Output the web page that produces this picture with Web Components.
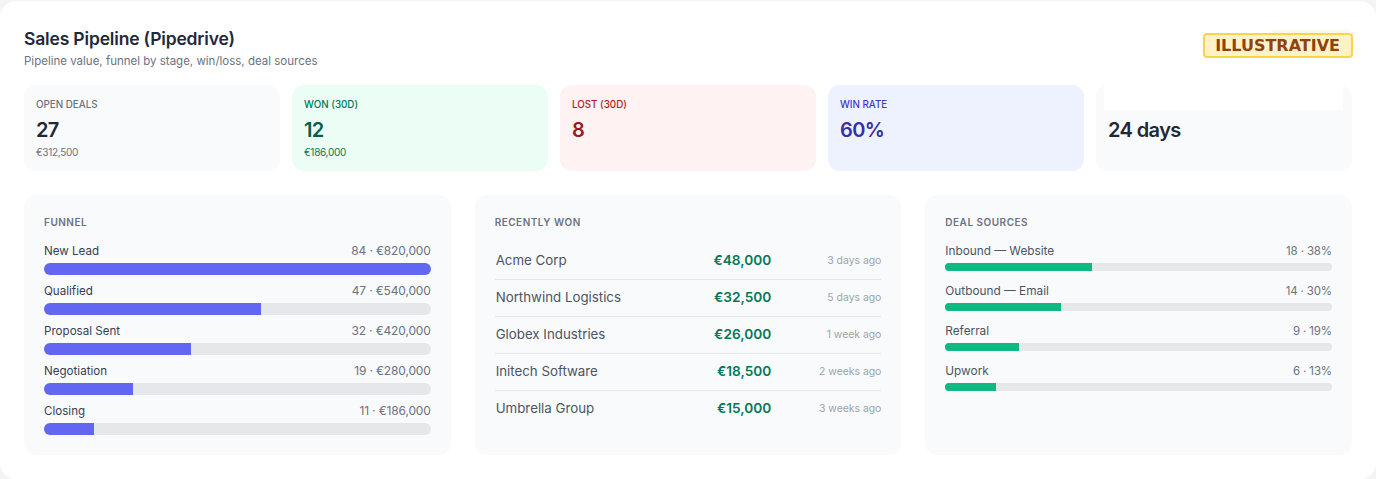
<!DOCTYPE html>
<html>
<head>
<meta charset="utf-8">
<style>
  html, body { margin: 0; height: 100%; }
  body {
    background: #f3f4f6;
    font-family: Inter, "Noto Sans", sans-serif;
    padding-top: 1px;
    box-sizing: border-box;
    overflow: hidden;
  }
</style>
</head>
<body>
<pipeline-dashboard>
  <stat-card label="Open Deals" value="27" sub="€312,500"></stat-card>
  <stat-card tone="green" label="Won (30d)" value="12" sub="€186,000"></stat-card>
  <stat-card tone="red" label="Lost (30d)" value="8"></stat-card>
  <stat-card tone="blue" label="Win Rate" value="60%"></stat-card>
  <stat-card covered value="24 days"></stat-card>

  <panel-box slot="panels" heading="Funnel">
    <bar-row name="New Lead" info="84 · €820,000" pct="100"></bar-row>
    <bar-row name="Qualified" info="47 · €540,000" pct="56"></bar-row>
    <bar-row name="Proposal Sent" info="32 · €420,000" pct="38"></bar-row>
    <bar-row name="Negotiation" info="19 · €280,000" pct="23"></bar-row>
    <bar-row name="Closing" info="11 · €186,000" pct="13"></bar-row>
  </panel-box>
  <panel-box slot="panels" heading="Recently Won">
    <won-row name="Acme Corp" amount="€48,000" when="3 days ago"></won-row>
    <won-row name="Northwind Logistics" amount="€32,500" when="5 days ago"></won-row>
    <won-row name="Globex Industries" amount="€26,000" when="1 week ago"></won-row>
    <won-row name="Initech Software" amount="€18,500" when="2 weeks ago"></won-row>
    <won-row name="Umbrella Group" amount="€15,000" when="3 weeks ago"></won-row>
  </panel-box>
  <panel-box slot="panels" heading="Deal Sources">
    <bar-row thin name="Inbound — Website" info="18 · 38%" pct="38"></bar-row>
    <bar-row thin name="Outbound — Email" info="14 · 30%" pct="30"></bar-row>
    <bar-row thin name="Referral" info="9 · 19%" pct="19"></bar-row>
    <bar-row thin name="Upwork" info="6 · 13%" pct="13"></bar-row>
  </panel-box>
</pipeline-dashboard>

<script>
class PipelineDashboard extends HTMLElement {
  constructor() {
    super();
    this.attachShadow({ mode: "open" }).innerHTML = `
      <style>
        :host {
          display: block;
          background: #fff;
          border-radius: 16px;
          padding: 24px;
          height: 478px;
          box-sizing: border-box;
        }
        header {
          display: flex;
          justify-content: space-between;
          align-items: flex-start;
          margin-bottom: 16px;
        }
        h1 {
          margin: 0;
          font-size: 17.5px;
          line-height: 28px;
          font-weight: 600;
          letter-spacing: -0.17px;
          color: #1f2937;
        }
        p {
          margin: 0;
          font-size: 11.5px;
          line-height: 16px;
          color: #6b7280;
        }
        .badge {
          position: relative;
          margin: 8px -1px 0 0;
          font: bold 16px/21px "DejaVu Sans", sans-serif;
          color: #92400e;
          background: #fef3c7;
          border: 2px solid #fcd34d;
          border-radius: 4px;
          padding: 0 11px 0 10px;
        }
        /* faint strip that sticks out above the badge */
        .badge::before {
          content: "";
          position: absolute;
          left: 67px;
          right: 1px;
          top: -5px;
          height: 3px;
          background: #fef9e7;
        }
        .stats {
          display: grid;
          grid-template-columns: repeat(5, 1fr);
          gap: 12px;
          margin-bottom: 24px;
        }
        .panels {
          display: grid;
          grid-template-columns: repeat(3, 1fr);
          gap: 24px;
        }
      </style>
      <header>
        <div>
          <h1>Sales Pipeline (Pipedrive)</h1>
          <p>Pipeline value, funnel by stage, win/loss, deal sources</p>
        </div>
        <span class="badge">ILLUSTRATIVE</span>
      </header>
      <div class="stats"><slot></slot></div>
      <div class="panels"><slot name="panels"></slot></div>
    `;
  }
}

class StatCard extends HTMLElement {
  constructor() {
    super();
    this.attachShadow({ mode: "open" });
  }

  connectedCallback() {
    const label = this.getAttribute("label") || "";
    const sub = this.getAttribute("sub") || "";
    this.shadowRoot.innerHTML = `
      <style>
        :host {
          display: block;
          position: relative;
          height: 86px;
          box-sizing: border-box;
          padding: 12px;
          border-radius: 12px;
          background: #f9fafb;
          --label: #6b7280;
          --value: #1f2937;
          --sub: #6b7280;
        }
        :host([tone="green"]) { background: #ecfdf5; --label: #047857; --value: #065f46; --sub: #047857; }
        :host([tone="red"]) { background: #fef2f2; --label: #b91c1c; --value: #991b1b; }
        :host([tone="blue"]) { background: #eef2ff; --label: #4338ca; --value: #3730a3; }
        .label {
          font-size: 9.8px;
          line-height: 15px;
          font-weight: 500;
          text-transform: uppercase;
          color: var(--label);
        }
        .value {
          margin-top: 4px;
          font-size: 20px;
          line-height: 28px;
          font-weight: 600;
          letter-spacing: -0.6px;
          color: var(--value);
        }
        .sub {
          margin-top: 1px;
          font-size: 10px;
          line-height: 15px;
          letter-spacing: -0.3px;
          color: var(--sub);
        }
        .label:empty { height: 15px; }
        .cover {
          position: absolute;
          left: 8px;
          top: 0;
          width: 239px;
          height: 25px;
          background: #fff;
        }
      </style>
      <div class="label">${label}</div>
      <div class="value">${this.getAttribute("value")}</div>
      <div class="sub">${sub}</div>
      ${this.hasAttribute("covered") ? '<div class="cover"></div>' : ""}
    `;
  }
}

class PanelBox extends HTMLElement {
  constructor() {
    super();
    this.attachShadow({ mode: "open" });
  }

  connectedCallback() {
    this.shadowRoot.innerHTML = `
      <style>
        :host {
          display: block;
          height: 260px;
          box-sizing: border-box;
          padding: 20px;
          border-radius: 12px;
          background: #f9fafb;
        }
        h2 {
          margin: 0 0 13px;
          font-size: 10px;
          line-height: 15px;
          font-weight: 600;
          letter-spacing: 0.5px;
          text-transform: uppercase;
          color: #6b7280;
        }
      </style>
      <h2>${this.getAttribute("heading")}</h2>
      <slot></slot>
    `;
  }
}

class BarRow extends HTMLElement {
  constructor() {
    super();
    this.attachShadow({ mode: "open" });
  }

  connectedCallback() {
    this.shadowRoot.innerHTML = `
      <style>
        :host {
          display: block;
          margin-bottom: 8px;
          --fill: #6366f1;
          --bar: 12px;
          --name: #374151;
          --info-size: 12px;
          --name-size: 11.6px;
        }
        :host([thin]) {
          margin-bottom: 12px;
          --fill: #10b981;
          --bar: 8px;
          --name: #4b5563;
          --info-size: 11.5px;
          --name-size: 11.8px;
        }
        .top {
          display: flex;
          justify-content: space-between;
          line-height: 16px;
          margin-bottom: 4px;
        }
        .name { font-size: var(--name-size); color: var(--name); }
        .info { font-size: var(--info-size); letter-spacing: -0.15px; color: #6b7280; }
        .track {
          height: var(--bar);
          border-radius: 6px;
          background: #e5e7eb;
          overflow: hidden;
        }
        .fill {
          height: 100%;
          width: ${this.getAttribute("pct")}%;
          background: var(--fill);
        }
      </style>
      <div class="top">
        <span class="name">${this.getAttribute("name")}</span>
        <span class="info">${this.getAttribute("info")}</span>
      </div>
      <div class="track"><div class="fill"></div></div>
    `;
  }
}

class WonRow extends HTMLElement {
  constructor() {
    super();
    this.attachShadow({ mode: "open" });
  }

  connectedCallback() {
    this.shadowRoot.innerHTML = `
      <style>
        :host {
          display: flex;
          align-items: center;
          height: 37px;
          box-sizing: border-box;
          border-bottom: 1px solid #e5e7eb;
          padding: 0 0 3px 1px;
        }
        :host(:last-child) { border-bottom-color: transparent; }
        .name { flex: 1; font-size: 13.3px; color: #4b5563; }
        .amount { font-size: 13.7px; font-weight: 600; color: #047857; }
        .when {
          width: 110px;
          margin-top: 2px;
          text-align: right;
          font-size: 10.4px;
          color: #9ca3af;
        }
      </style>
      <span class="name">${this.getAttribute("name")}</span>
      <span class="amount">${this.getAttribute("amount")}</span>
      <span class="when">${this.getAttribute("when")}</span>
    `;
  }
}

customElements.define("pipeline-dashboard", PipelineDashboard);
customElements.define("stat-card", StatCard);
customElements.define("panel-box", PanelBox);
customElements.define("bar-row", BarRow);
customElements.define("won-row", WonRow);
</script>
</body>
</html>
